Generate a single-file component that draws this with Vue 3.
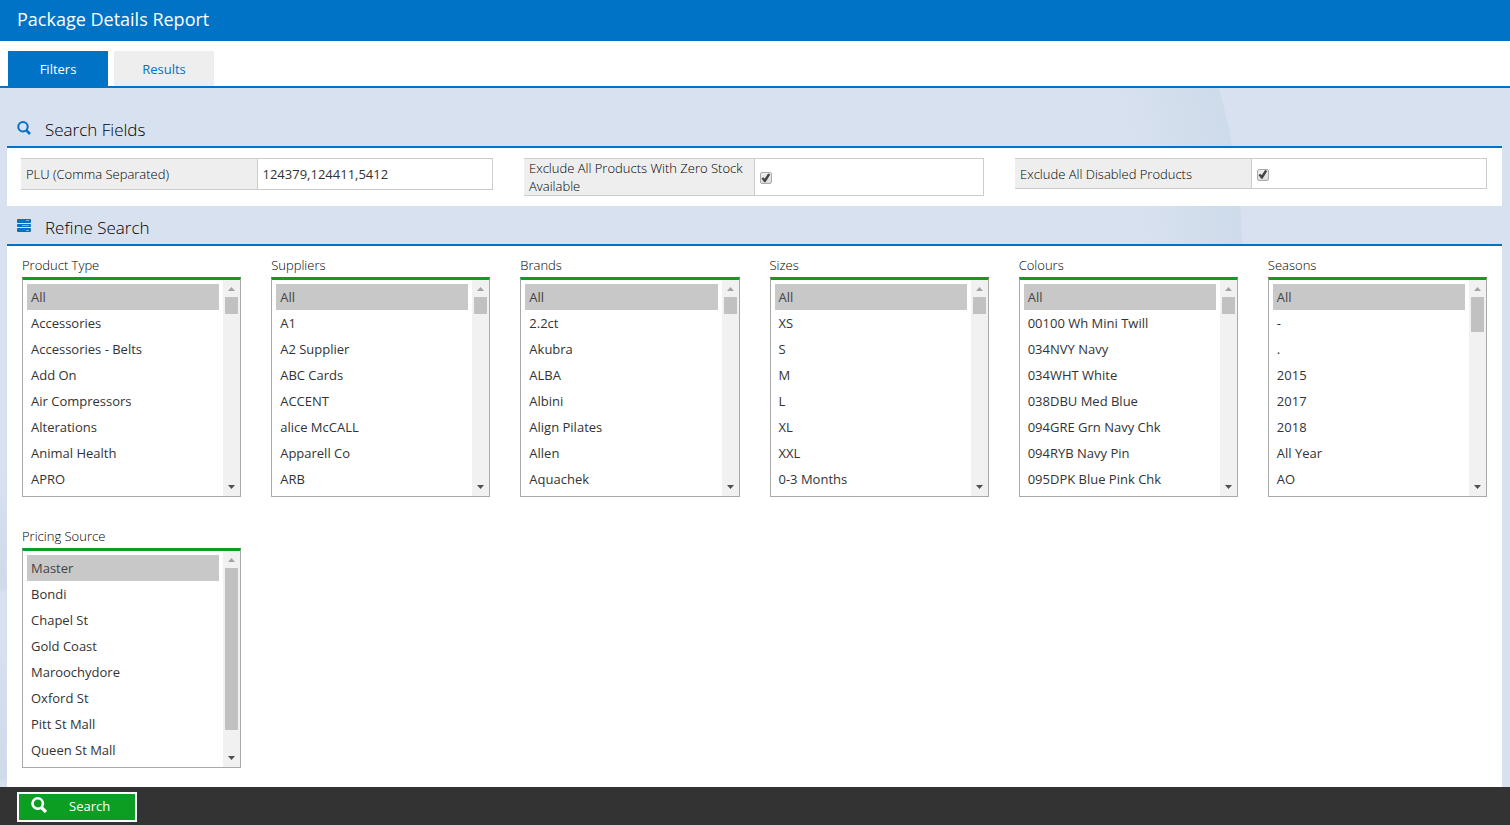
<script setup>
import { reactive, ref } from 'vue'

const tab = ref('filters')
const plu = ref('124379,124411,5412')
const excludeZero = ref(true)
const excludeDisabled = ref(true)

const lists = reactive([
  { id: 'type', label: 'Product Type', thumb: 17, selected: ['All'], options: ['All', 'Accessories', 'Accessories - Belts', 'Add On', 'Air Compressors', 'Alterations', 'Animal Health', 'APRO'] },
  { id: 'suppliers', label: 'Suppliers', thumb: 17, selected: ['All'], options: ['All', 'A1', 'A2 Supplier', 'ABC Cards', 'ACCENT', 'alice McCALL', 'Apparell Co', 'ARB'] },
  { id: 'brands', label: 'Brands', thumb: 17, selected: ['All'], options: ['All', '2.2ct', 'Akubra', 'ALBA', 'Albini', 'Align Pilates', 'Allen', 'Aquachek'] },
  { id: 'sizes', label: 'Sizes', thumb: 17, selected: ['All'], options: ['All', 'XS', 'S', 'M', 'L', 'XL', 'XXL', '0-3 Months'] },
  { id: 'colours', label: 'Colours', thumb: 17, selected: ['All'], options: ['All', '00100 Wh Mini Twill', '034NVY Navy', '034WHT White', '038DBU Med Blue', '094GRE Grn Navy Chk', '094RYB Navy Pin', '095DPK Blue Pink Chk'] },
  { id: 'seasons', label: 'Seasons', thumb: 35, selected: ['All'], options: ['All', '-', '.', '2015', '2017', '2018', 'All Year', 'AO'] },
  { id: 'pricing', label: 'Pricing Source', thumb: 162, selected: ['Master'], options: ['Master', 'Bondi', 'Chapel St', 'Gold Coast', 'Maroochydore', 'Oxford St', 'Pitt St Mall', 'Queen St Mall'] },
])
</script>

<template>
  <div class="page">
    <header class="title-bar"><h1>Package Details Report</h1></header>

    <nav class="tabs">
      <button type="button" class="tab" :class="{ active: tab === 'filters' }" @click="tab = 'filters'">Filters</button>
      <button type="button" class="tab" :class="{ active: tab === 'results' }" @click="tab = 'results'">Results</button>
    </nav>

    <main class="content">
      <h2 class="section-title">
        <svg class="section-icon" viewBox="0 0 14 14" aria-hidden="true">
          <circle cx="6" cy="5.7" r="4.7" fill="none" stroke="currentColor" stroke-width="2" />
          <path d="M9.2 9.2L13 13" stroke="currentColor" stroke-width="2.6" />
        </svg>
        Search Fields
      </h2>
      <section class="panel fields">
        <div class="field plu">
          <label for="plu">PLU (Comma Separated)</label>
          <div class="value"><input id="plu" v-model="plu" type="text" class="text-input" /></div>
        </div>
        <div class="field">
          <label for="zero">Exclude All Products With Zero Stock Available</label>
          <div class="value"><input id="zero" v-model="excludeZero" type="checkbox" class="check" /></div>
        </div>
        <div class="field">
          <label for="disabled">Exclude All Disabled Products</label>
          <div class="value"><input id="disabled" v-model="excludeDisabled" type="checkbox" class="check" /></div>
        </div>
      </section>

      <h2 class="section-title">
        <svg class="section-icon" viewBox="0 0 14 14" aria-hidden="true">
          <g fill="currentColor">
            <rect x="0" y="0" width="14" height="4" rx="1" />
            <rect x="0" y="5" width="14" height="3" rx="1" />
            <rect x="0" y="9" width="14" height="4" rx="1" />
          </g>
          <path d="M9 1.5h3M5 6.5h7M9 11.5h3" stroke="#d8e1ef" stroke-width="1" opacity="0.6" />
        </svg>
        Refine Search
      </h2>
      <section class="panel refine">
        <div v-for="list in lists" :key="list.id" class="filter">
          <label :for="list.id">{{ list.label }}</label>
          <div class="list-frame">
            <select :id="list.id" v-model="list.selected" multiple size="8">
              <option v-for="o in list.options" :key="o">{{ o }}</option>
            </select>
            <div class="scrollbar" aria-hidden="true">
              <svg class="arrow up" viewBox="0 0 7 4"><path d="M0 4L3.5 0L7 4z" /></svg>
              <div class="track"><div class="thumb" :style="{ height: list.thumb + 'px' }"></div></div>
              <svg class="arrow" viewBox="0 0 7 4"><path d="M0 0L3.5 4L7 0z" /></svg>
            </div>
          </div>
        </div>
      </section>
    </main>

    <footer class="footer">
      <button type="button" class="search">
        <svg viewBox="0 0 16 16" aria-hidden="true">
          <circle cx="6.7" cy="6.5" r="5.2" fill="none" stroke="currentColor" stroke-width="2.6" />
          <path d="M10.5 10.5L15 15" stroke="currentColor" stroke-width="3.2" />
        </svg>
        <span>Search</span>
      </button>
    </footer>
  </div>
</template>

<style>
body {
  margin: 0;
}
</style>

<style scoped>
* {
  box-sizing: border-box;
}
.page {
  display: flex;
  flex-direction: column;
  min-height: 100vh;
  background: #fff;
  color: #000;
  font: 350 13px/18px "Open Sans", "Noto Sans", sans-serif;
}
button,
input,
select {
  margin: 0;
  font: inherit;
  border-radius: 0;
}
.title-bar {
  height: 41px;
  padding: 0 17px;
  background: #0073c6;
  color: #fff;
}
h1 {
  margin: 0;
  font-size: 18px;
  font-weight: 400;
  line-height: 39px;
}
.tabs {
  display: flex;
  gap: 6px;
  padding: 10px 8px 0;
  border-bottom: 2px solid #0073c6;
}
.tab {
  width: 100px;
  height: 35px;
  border: 0;
  padding: 0;
  background: #eee;
  color: #0073c6;
  font-weight: 400;
}
.tab.active {
  background: #0073c6;
  color: #fff;
}
.content {
  flex: 1;
  display: flex;
  flex-direction: column;
  padding: 20px 8px 0 7px;
  background:
    radial-gradient(circle 643px at -310px 172px, rgba(206, 219, 234, 0) 84%, #cedbea 99.8%, transparent 100%) right top / 600px 100% no-repeat,
    linear-gradient(rgba(206, 219, 234, 0) 380px, #cedbea 500px, rgba(206, 219, 234, 0) 504px, rgba(206, 219, 234, 0) 540px, #cedbea 690px, #d8e1ef 696px) left top / 7px 100% no-repeat,
    #d8e1ef;
}
.section-title {
  display: flex;
  align-items: center;
  gap: 14px;
  height: 38px;
  margin: 0;
  padding: 6px 10px 0;
  font-size: 17px;
  font-weight: 350;
  line-height: 24px;
}
.section-icon {
  width: 14px;
  height: 14px;
  margin-bottom: 4px;
  color: #0073c6;
}
.panel {
  border-top: 2px solid #0073c6;
  background: #fff;
}
.fields {
  display: grid;
  grid-template-columns: 472fr 460fr 472fr;
  align-items: start;
  gap: 31px;
  padding: 10px 15px 10px 14px;
}
.field {
  display: grid;
  grid-template-columns: 1fr 1fr;
  min-height: 31px;
  border: 1px solid #ccc;
  border-left: 0;
}
.field.plu {
  min-height: 32px;
}
.field label {
  display: flex;
  align-items: center;
  padding: 0 5px;
  background: #eee;
}
.value {
  display: flex;
  align-items: center;
  border-left: 1px solid #ccc;
  padding: 0 5px;
}
.text-input {
  width: 100%;
  padding: 0;
  border: 0;
  outline: 0;
  background: none;
  color: #333;
  font-weight: 400;
}
.check {
  appearance: none;
  width: 12px;
  height: 12px;
  margin-top: 2px;
  border: 1px solid #aaa;
  border-radius: 2px;
  background: linear-gradient(#eee, #ddd);
}
.check:checked::before {
  content: "";
  display: block;
  width: 10px;
  height: 10px;
  background: #444;
  clip-path: polygon(10% 55%, 28% 42%, 42% 58%, 76% 5%, 98% 16%, 50% 92%, 38% 92%);
}
.refine {
  flex: 1;
  display: grid;
  grid-template-columns: repeat(6, minmax(0, 1fr));
  align-content: start;
  gap: 30px;
  padding: 10px 15px 19px;
}
.filter {
  display: flex;
  flex-direction: column;
  gap: 3px;
}
.list-frame {
  display: flex;
  border: 1px solid #a9a9a9;
  border-top: 3px solid #0c9e23;
}
select {
  flex: 1;
  min-width: 0;
  height: 216px;
  padding: 4px;
  border: 0;
  outline: 0;
  background: #fff;
  color: #222;
  scrollbar-width: none;
}
option {
  min-height: 26px;
  padding: 4px;
  color: #333;
  line-height: 18px;
}
option:checked {
  background: #c8c8c8 linear-gradient(#c8c8c8, #c8c8c8);
  color: #444;
}
.scrollbar {
  display: flex;
  flex-direction: column;
  align-items: center;
  width: 17px;
  padding: 7px 0;
  background: #f1f1f1;
}
.track {
  flex: 1;
  width: 13px;
  padding-top: 6px;
}
.thumb {
  background: #c1c1c1;
}
.arrow {
  width: 7px;
  height: 4px;
  fill: #505050;
}
.arrow.up {
  fill: #a3a3a3;
}
.footer {
  height: 38px;
  padding: 5px 17px;
  background: #333;
}
.search {
  display: flex;
  align-items: center;
  gap: 22px;
  width: 120px;
  height: 30px;
  padding: 0 12px 2px;
  border: 2px solid #fff;
  background: #0c9e23;
  color: #fff;
  font-weight: 400;
}
.search svg {
  width: 16px;
  height: 16px;
  margin-bottom: 2px;
}
</style>
